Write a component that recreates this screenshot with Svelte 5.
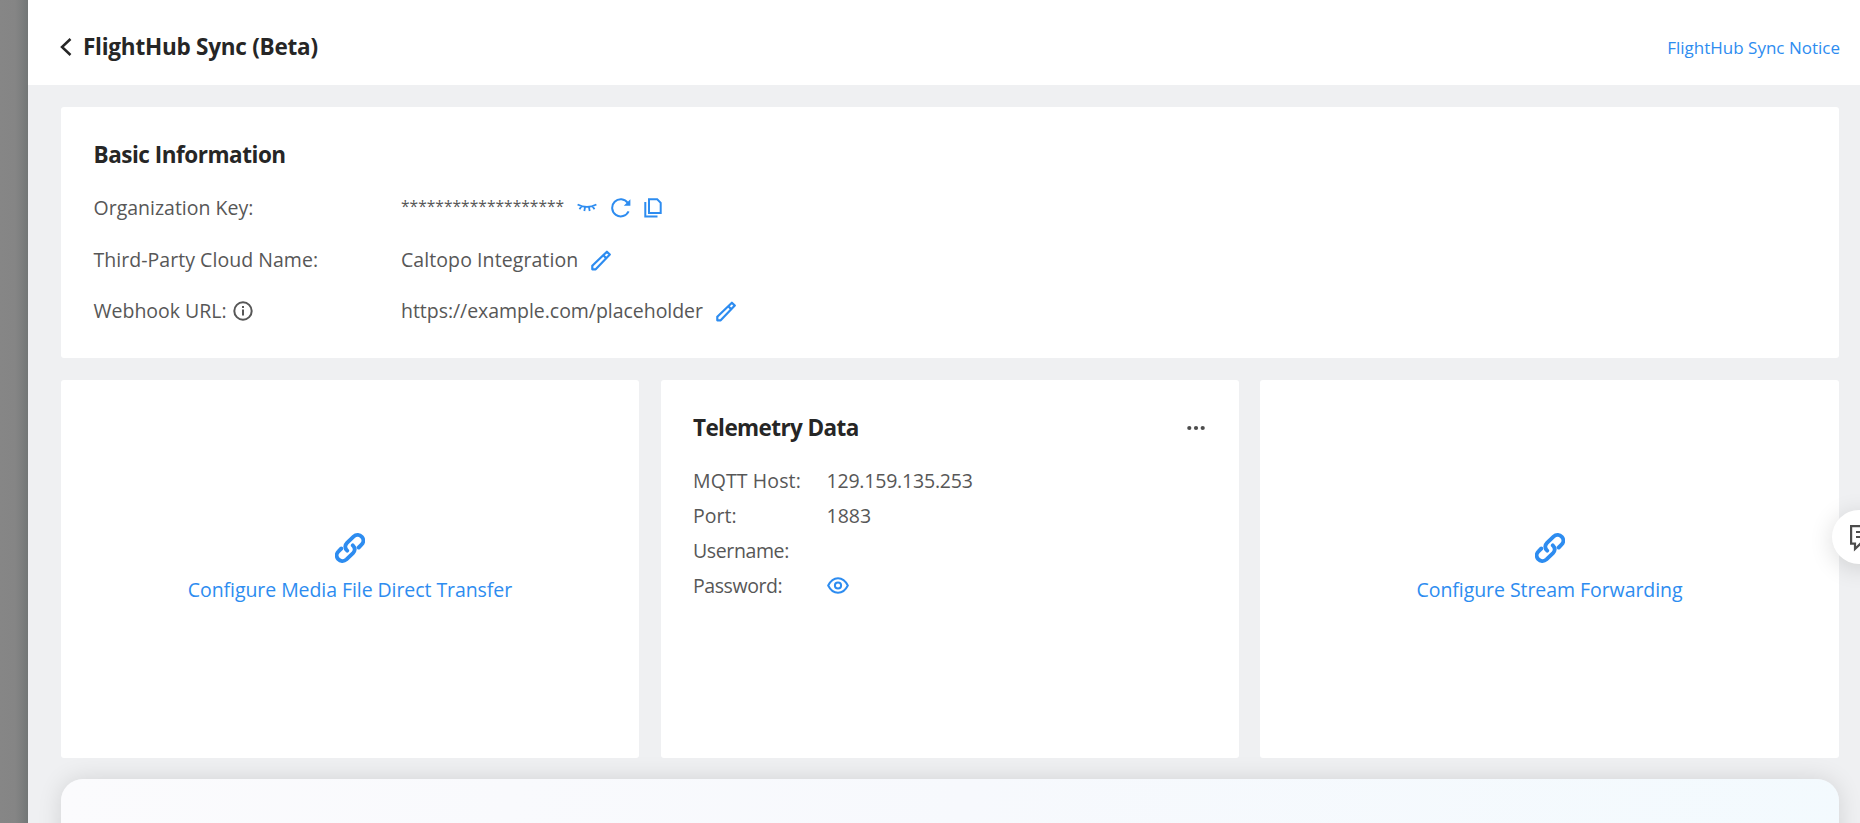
<script>
  const telemetry = [
    { label: 'MQTT Host:', value: '129.159.135.253', cls: 'host' },
    { label: 'Port:', value: '1883', cls: 'port' },
    { label: 'Username:', value: '', cls: 'user' },
    { label: 'Password:', value: '', cls: 'pass', eye: true }
  ];
</script>

{#snippet pencil()}
  <svg class="icon" width="20" height="21" viewBox="0 0 20 21" fill="none" stroke="currentColor" stroke-width="2.200" stroke-linejoin="round">
    <path d="M1.300 19.300v-3.500L15.900 1.700l2.900 2.900L4.700 19.300z" />
    <path d="M12.300 5.200l2.900 2.900" />
  </svg>
{/snippet}

{#snippet chain()}
  <svg class="icon" width="30" height="30" viewBox="0 0 30 30" fill="none" stroke="currentColor" stroke-width="3.900" stroke-linecap="round">
    <path d="M12.2 17.6C9.4 15 10 11.8 12 9.8L18.5 3.6C21.3 1.1 24.8 1.7 26.8 3.8c2 2.2 2 5.700-.3 7.900L23.700 14.500" />
    <path d="M17.8 12.4C20.600 15 20 18.200 18 20.200L11.500 26.400C8.700 28.900 5.200 28.300 3.200 26.200c-2-2.200-2-5.700.3-7.900L6.300 15.500" />
  </svg>
{/snippet}

<div class="page">
  <div class="mask"></div>
  <main class="drawer">
    <header>
      <svg class="icon back" width="12" height="18" viewBox="0 0 12 18" fill="none" stroke="currentColor" stroke-width="2.500"><path d="M10.500 1L2 9l8.500 8" /></svg>
      <h1>FlightHub Sync (Beta)</h1>
      <a class="notice" href="#notice">FlightHub Sync Notice</a>
    </header>
    <div class="content">
      <section class="card basic">
        <h2 class="t-basic">Basic Information</h2>
        <div class="row">
          <div class="label"><span class="org">Organization Key:</span></div>
          <span class="stars">*******************</span>
          <div class="tools">
            <svg class="icon" width="20" height="20" viewBox="0 0 20 20" fill="none" stroke="currentColor" stroke-width="1.800"><path d="M.6 6.500Q10 11.400 19.400 6.500M4.400 8.400L2.500 11.200M8 9.300L7.300 13M12 9.300L12.700 13M15.600 8.400L17.500 11.200" /></svg>
            <svg class="icon" width="20" height="20" viewBox="0 0 20 20" fill="none" stroke="currentColor" stroke-width="2"><path d="M17.600 13.400A8.600 8.600 0 1 1 16.800 4.800" /><path d="M19.400 1.200v6.600h-6.600z" fill="currentColor" stroke="none" /></svg>
            <svg class="icon" width="18" height="20" viewBox="0 0 18 20" fill="none" stroke="currentColor" stroke-width="2"><path d="M5 1.300h8.200l3.500 3.600v10H5z" /><path d="M1.300 4v14.600h12.200" /></svg>
          </div>
        </div>
        <div class="row">
          <div class="label"><span class="third">Third-Party Cloud Name:</span></div>
          <span class="cal">Caltopo Integration</span>
          <span class="edit">{@render pencil()}</span>
        </div>
        <div class="row last">
          <div class="label">
            <span class="web">Webhook URL:</span>
            <svg class="icon info" width="20" height="20" viewBox="0 0 20 20" fill="none" stroke="currentColor" stroke-width="2"><circle cx="10" cy="10" r="8.700" /><path d="M10 8.600v6M10 5v2" /></svg>
          </div>
          <span class="url">https://example.com/placeholder</span>
          <span class="edit">{@render pencil()}</span>
        </div>
      </section>
      <div class="columns">
        <section class="card center">
          {@render chain()}
          <span class="media">Configure Media File Direct Transfer</span>
        </section>
        <section class="card telemetry">
          <div class="head">
            <h2 class="t-tele">Telemetry Data</h2>
            <svg class="more" width="18" height="6" viewBox="0 0 18 6" fill="currentColor"><circle cx="2.300" cy="3" r="2.100" /><circle cx="9" cy="3" r="2.100" /><circle cx="15.700" cy="3" r="2.100" /></svg>
          </div>
          {#each telemetry as item}
            <div class="trow">
              <div class="tlabel"><span class={item.cls}>{item.label}</span></div>
              {#if item.eye}
                <svg class="icon eye" width="22" height="17" viewBox="0 0 22 17" fill="none" stroke="currentColor" stroke-width="2"><path d="M1.200 8.500Q4.800 1.200 11 1.200T20.800 8.500Q17.200 15.800 11 15.800T1.200 8.500z" /><circle cx="11" cy="8.500" r="3.100" /></svg>
              {:else}
                <span class="{item.cls}-value">{item.value}</span>
              {/if}
            </div>
          {/each}
        </section>
        <section class="card center">
          {@render chain()}
          <span class="stream">Configure Stream Forwarding</span>
        </section>
      </div>
      <section class="banner"></section>
    </div>
  </main>
  <button class="feedback" aria-label="Feedback">
    <svg width="28" height="28" viewBox="0 0 28 28" fill="none" stroke="currentColor" stroke-width="2.200"><path d="M2.100 2.100h23v17.500H11.500L6 25v-5.400H2.100z" /><path d="M7 8h13M7 13h13" /></svg>
  </button>
</div>

<style>
  :global(body) { margin: 0; overflow: hidden; }
  .page { position: relative; display: flex; width: 1860px; height: 823px; overflow: hidden; font-family: "Segoe UI", "Open Sans", "Noto Sans", sans-serif; font-size: 19.500px; color: #575757; background: #eff0f2; }
  .mask { width: 28px; flex: none; background: linear-gradient(90deg, #868686 0, #858585 15px, #7c7e7e 22px, #727676 28px); }
  .drawer { flex: 1; min-width: 0; }
  header { display: flex; align-items: center; height: 85px; box-sizing: border-box; padding: 9px 20px 0 32px; background: #fff; }
  h1, h2 { margin: 0; font-size: 22.500px; line-height: 30px; font-weight: 700; color: #262626; }
  h1 { letter-spacing: -0.240px; }
  .t-basic { letter-spacing: -0.480px; }
  .t-tele { letter-spacing: -0.600px; }
  h1, h2, span, a { white-space: nowrap; }
  .icon { flex: none; color: #2d8cf0; }
  .back { color: #262626; margin-right: 11px; }
  .notice { margin-left: auto; font-size: 17px; line-height: 26px; color: #2d8cf0; text-decoration: none; padding-top: 2px; }
  .content { padding: 22px 21px 0 33px; }
  .card { background: #fff; border-radius: 3px; box-sizing: border-box; }
  .basic { height: 251px; padding: 33px 32px 0 32.500px; }
  .row { display: flex; align-items: center; height: 52px; }
  .row.last { height: 50px; }
  .basic h2 { margin-bottom: 12px; }
  .label { display: flex; align-items: center; width: 307.500px; flex: none; }
  .label span, .cal, .url { padding-bottom: 2px; }
  .third { letter-spacing: 0.040px; }
  .cal { letter-spacing: 0.080px; }
  .url { letter-spacing: -0.040px; }
  .stars { font-size: 15.600px; padding-bottom: 5px; }
  .tools { display: flex; gap: 13.500px; margin-left: 13px; }
  .edit { display: flex; margin-left: 13px; }
  .info { color: #575757; margin-left: 6px; }
  .last .info, .last .edit { padding-bottom: 0; }
  .columns { display: grid; grid-template-columns: 578px 578px 579px; column-gap: 21.500px; margin-top: 22px; }
  .columns .card { height: 378px; }
  .center { display: flex; flex-direction: column; align-items: center; padding-top: 153px; color: #2d8cf0; }
  .center span { margin-top: 13px; line-height: 28px; }
  .media { letter-spacing: -0.070px; }
  .stream { letter-spacing: -0.060px; }
  .telemetry { padding: 33px 34px 0 32.500px; }
  .head { display: flex; align-items: center; justify-content: space-between; margin-bottom: 20px; }
  .more { color: #4c4c4c; }
  .trow { display: flex; align-items: center; height: 35px; }
  .tlabel { width: 133.500px; flex: none; }
  .host { letter-spacing: 0.120px; }
  .host-value { letter-spacing: -0.200px; }
  .user { letter-spacing: -0.380px; }
  .pass { letter-spacing: -0.420px; }
  .banner { height: 200px; margin-top: 21px; border-radius: 22px; background: linear-gradient(100deg, #fbfbfd, #f7f9fd 50%, #f3fafe); box-shadow: 0 0 24px rgba(0, 0, 0, 0.12); }
  .feedback { position: absolute; left: 1832px; top: 510px; width: 54px; height: 54px; padding: 1px 0 0 8px; border: 0; border-radius: 50%; background: #fff; color: #4c4c4c; display: flex; align-items: center; justify-content: center; box-shadow: 0 4px 24px rgba(0, 0, 0, 0.14); }
</style>
